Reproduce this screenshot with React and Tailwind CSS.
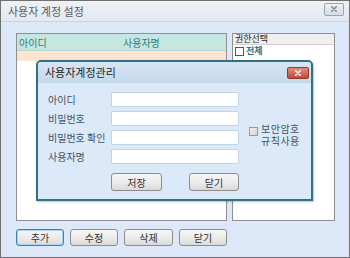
import React from "react";

function XIcon({ className }) {
  return (
    <svg viewBox="0 0 10 8" className={className}>
      <path d="M2 1 L8 7 M8 1 L2 7" stroke="currentColor" strokeWidth="2" strokeLinecap="round" />
    </svg>
  );
}

function Btn({ label, focused, className = "" }) {
  return (
    <button
      className={
        "flex items-center justify-center rounded-[3px] border bg-gradient-to-b from-[#f6f6f6] via-[#ececec] to-[#d9d9d9] text-[10px] text-[#333] " +
        (focused ? "border-[#3c7fb1] shadow-[inset_0_0_0_1px_#a9d4f2] " : "border-[#8d8d8d] ") +
        className
      }
    >
      {label}
    </button>
  );
}

function Field({ label }) {
  return (
    <div className="flex items-center h-[15px]">
      <span className="w-[63px] text-[10px] text-[#3d5266]">{label}</span>
      <div className="w-[128px] h-[15px] bg-white border border-[#c2d3e4] rounded-[2px]" />
    </div>
  );
}

export default function App() {
  return (
    <div className="relative w-[350px] h-[258px] overflow-hidden bg-[#dde9f8] border border-[#707070] flex flex-col font-['Noto_Sans_CJK_KR',sans-serif]">
      {/* window title */}
      <div className="h-[21px] flex items-center justify-between pl-[7px] pr-[5px] bg-gradient-to-b from-[#eef2f7] to-[#e2e9f1] border-b border-[#c9d4df]">
        <span className="text-[11px] text-[#5a5a5a]">사용자 계정 설정</span>
        <div className="w-[20px] h-[13px] mt-[-4px] rounded-[2px] border border-[#9aa5b1] bg-gradient-to-b from-[#eef1f5] to-[#d6dde5] flex items-center justify-center text-[#7d8690]">
          <XIcon className="w-[8px] h-[6px]" />
        </div>
      </div>

      <div className="flex-1 pl-[15px] pt-[11px]">
        <div className="flex gap-[5px] h-[188px]">
          {/* user list */}
          <div className="w-[211px] bg-white border border-[#8f8f8f] flex flex-col">
            <div className="h-[17px] bg-[#c6e6e2] flex items-center text-[10px] text-[#2e7c7a] border-b border-[#b3d6d2]">
              <span className="pl-[2px] w-[106px]">아이디</span>
              <span>사용자명</span>
            </div>
            <div className="h-[10px] bg-[#fde3d0]" />
          </div>

          {/* permissions */}
          <div className="w-[103px] bg-white border border-[#8f8f8f] flex flex-col">
            <div className="h-[11px] bg-[#efefef] border-b border-[#d2d2d2] flex items-center pl-[2px] text-[9px] text-[#222]">
              권한선택
            </div>
            <div className="h-[12px] flex items-center gap-[2px] pl-[2px]">
              <div className="w-[9px] h-[9px] border border-[#555] bg-white" />
              <span className="text-[9px] font-bold text-[#2d6f8a]">전체</span>
            </div>
          </div>
        </div>

        <div className="flex gap-[6px] mt-[8px]">
          <Btn label="추가" focused className="w-[48px] h-[17px]" />
          <Btn label="수정" className="w-[48px] h-[17px]" />
          <Btn label="삭제" className="w-[49px] h-[17px]" />
          <Btn label="닫기" className="w-[48px] h-[17px]" />
        </div>
      </div>

      {/* modal dialog */}
      <div className="absolute left-[35px] top-[59px] w-[277px] h-[141px] rounded-t-[5px] border-2 border-[#2f7383] bg-[#dce9f8] flex flex-col shadow-[1px_1px_2px_rgba(0,0,0,0.25)]">
        <div className="h-[21px] flex items-center justify-between pl-[7px] pr-[2px] bg-gradient-to-b from-[#d7e5f3] to-[#c5d9ec] rounded-t-[3px]">
          <span className="text-[11px] text-[#1f1f1f]">사용자계정관리</span>
          <div className="w-[22px] h-[12px] rounded-[2px] border border-[#8a3a30] bg-gradient-to-b from-[#e48a7c] to-[#c4493b] flex items-center justify-center text-white">
            <XIcon className="w-[8px] h-[6px]" />
          </div>
        </div>
        <div className="flex pl-[10px] pt-[9px]">
          <div className="flex flex-col gap-[4px]">
            <Field label="아이디" />
            <Field label="비밀번호" />
            <Field label="비밀번호 확인" />
            <Field label="사용자명" />
            <div className="flex gap-[27px] pl-[63px] mt-[5px]">
              <Btn label="저장" className="w-[51px] h-[18px]" />
              <Btn label="닫기" className="w-[50px] h-[18px]" />
            </div>
          </div>
          <div className="flex items-start gap-[3px] ml-[10px] mt-[32px]">
            <div className="w-[9px] h-[9px] mt-[3px] border border-[#9a9a9a] bg-gradient-to-br from-[#f0f0f0] to-[#d4d4d4]" />
            <div className="flex flex-col items-center text-[10px] leading-[12px] text-[#3d5266] tracking-[0.5px] font-['Liberation_Sans','Noto_Sans_CJK_KR',sans-serif]">
              <span>보안암호</span>
              <span>규칙사용</span>
            </div>
          </div>
        </div>
      </div>
    </div>
  );
}
